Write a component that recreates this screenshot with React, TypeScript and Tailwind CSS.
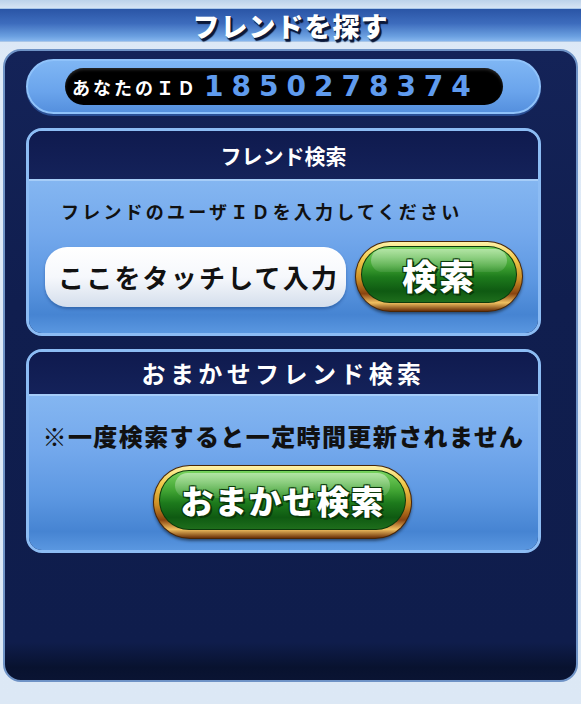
import React from "react";

const jp = { fontFamily: '"Noto Sans CJK JP", "Noto Sans", sans-serif' } as React.CSSProperties;

function GoldButton({ w, h, label, size, spacing }: { w: string; h: string; label: string; size: string; spacing: string }) {
  return (
    <div
      className={`${w} ${h} shrink-0 rounded-full p-[1px] bg-[#4a2606] shadow-[0_2px_3px_rgba(0,0,0,0.45)]`}
    >
      <div className="w-full h-full rounded-full pt-[4px] px-[5px] pb-[8px] bg-[linear-gradient(180deg,#fff3a8_0%,#f2c94a_25%,#c98a24_55%,#8a4410_75%,#f0c060_88%,#6a3008_100%)]">
        <div className="relative w-full h-full rounded-full p-[1px] bg-[#0c3a0c]">
          <div className="relative w-full h-full rounded-full overflow-hidden bg-[linear-gradient(180deg,#78d45e_0%,#3fa232_35%,#1d7a1c_55%,#0f5a12_80%,#1e6e1c_100%)] flex items-center justify-center">
            <div className="absolute left-[6%] right-[6%] top-[4%] h-[42%] rounded-full bg-[linear-gradient(180deg,rgba(255,255,255,0.45),rgba(255,255,255,0.08))]" />
            <span
              className={`relative text-white font-black ${size} ${spacing} leading-none [text-shadow:0_0_2px_#0a3a0a,2px_2px_0_#0a3a0a,-1px_-1px_0_#0a3a0a,1px_-1px_0_#0a3a0a,-1px_1px_0_#0a3a0a]`}
              style={jp}
            >
              {label}
            </span>
          </div>
        </div>
      </div>
    </div>
  );
}

export default function App() {
  return (
    <div
      className="w-[581px] h-[704px] overflow-hidden bg-[linear-gradient(180deg,#bcd2ea_0px,#d6e4f4_8px,#dfeaf7_60px,#dce8f5_100%)] flex flex-col"
      style={jp}
    >
      {/* Title bar */}
      <div className="mt-[8px] h-[34px] shrink-0 bg-[linear-gradient(180deg,#2a55a6_0%,#3d6cbd_45%,#6a9fe0_85%,#86b6ee_100%)] border-y border-[#a9c6e8] flex items-center justify-center">
        <span className="text-white font-black text-[27px] leading-none tracking-[1px] [text-shadow:2px_2px_0_#0c1838,1px_1px_0_#0c1838,2px_3px_1px_#0c1838]">
          フレンドを探す
        </span>
      </div>

      {/* Main panel */}
      <div className="mt-[7px] mx-[3px] h-[633px] shrink-0 rounded-[18px] border-2 border-[#6f93c6] bg-[linear-gradient(180deg,#142358_0%,#101e4f_40%,#0f1d4c_94%,#08122f_98%,#0a1433_100%)] pt-[8px] pl-[21px] pr-[26px] flex flex-col">
        {/* ID pill */}
        <div className="h-[55px] w-[515px] rounded-full bg-[linear-gradient(180deg,#7fb6f4_0%,#6aa4ec_60%,#5590de_100%)] border-2 border-[#8fc2fa] shadow-[0_2px_0_#2a4f95] flex items-center pl-[37px]">
          <div className="w-[438px] h-[37px] rounded-full bg-black flex items-center pl-[7px] shadow-[inset_0_2px_3px_rgba(255,255,255,0.15)]">
            <span className="text-white font-bold text-[18px] leading-none tracking-[3px]">あなたのＩＤ</span>
            <span
              className="ml-[6px] text-[#5f9bee] font-bold text-[28px] leading-none tracking-[8px]"
              style={{ fontFamily: '"DejaVu Sans", Verdana, sans-serif' }}
            >
              1850278374
            </span>
          </div>
        </div>

        {/* Section 1 */}
        <div className="mt-[14px] w-[515px] h-[208px] rounded-[16px] border-[3px] border-[#8cbcf4] overflow-hidden flex flex-col">
          <div className="h-[48px] shrink-0 bg-[linear-gradient(180deg,#0f1a4e,#14225a)] flex items-center justify-center">
            <span className="text-white font-bold text-[21px] leading-none">フレンド検索</span>
          </div>
          <div className="flex-1 border-t-2 border-[#a6cdf8] bg-[linear-gradient(180deg,#84b6f1_0%,#73a8ec_35%,#5d98e2_65%,#4684d2_88%,#5a97e0_100%)] flex flex-col">
            <div className="pt-[19px] pl-[32px] text-[#111] font-bold text-[18px] leading-[22px] tracking-[3.2px] whitespace-nowrap">
              フレンドのユーザＩＤを入力してください
            </div>
            <div className="mt-[19px] pl-[16px] flex items-center gap-[9px]">
              <div className="w-[301px] h-[60px] rounded-[22px] bg-[linear-gradient(180deg,#ffffff_0%,#f6f8fc_50%,#d4deec_100%)] shadow-[0_2px_3px_rgba(0,40,100,0.35)] flex items-center pl-[13px]">
                <span className="text-[#111] font-bold text-[26px] leading-none tracking-[2.2px] whitespace-nowrap">ここをタッチして入力</span>
              </div>
              <GoldButton w="w-[168px]" h="h-[71px]" label="検索" size="text-[35px]" spacing="tracking-[2px]" />
            </div>
          </div>
        </div>

        {/* Section 2 */}
        <div className="mt-[13px] w-[515px] h-[204px] rounded-[16px] border-[3px] border-[#8cbcf4] overflow-hidden flex flex-col">
          <div className="h-[42px] shrink-0 bg-[linear-gradient(180deg,#0f1a4e,#14225a)] flex items-center justify-center">
            <span className="text-white font-bold text-[24px] leading-none tracking-[4.4px]">おまかせフレンド検索</span>
          </div>
          <div className="flex-1 border-t-2 border-[#a6cdf8] bg-[linear-gradient(180deg,#84b6f1_0%,#73a8ec_35%,#5d98e2_65%,#4684d2_88%,#5a97e0_100%)] flex flex-col items-center">
            <div className="pt-[26px] text-[#111] font-black text-[24px] leading-[28px] tracking-[1.4px] whitespace-nowrap">
              ※一度検索すると一定時間更新されません
            </div>
            <div className="mt-[15px] mr-[2px]">
              <GoldButton w="w-[259px]" h="h-[74px]" label="おまかせ検索" size="text-[33px]" spacing="tracking-[1px]" />
            </div>
          </div>
        </div>
      </div>
    </div>
  );
}
